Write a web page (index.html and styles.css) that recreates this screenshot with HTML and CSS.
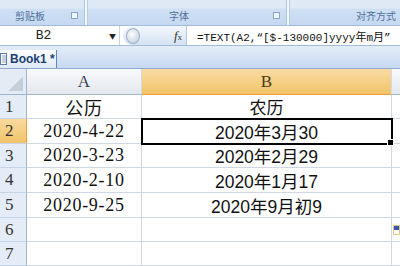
FILE: index.html
```html
<!DOCTYPE html>
<html lang="zh-CN">
<head>
    <meta charset="UTF-8">
    <title>Book1 - 农历</title>
    <link rel="stylesheet" href="styles.css">
</head>
<body>
    <!-- Ribbon group labels -->
    <div class="ribbon">
        <div class="group group-clip">
            <span class="group-label">剪贴板</span>
            <span class="launcher"></span>
        </div>
        <div class="group group-font">
            <span class="group-label">字体</span>
            <span class="launcher"></span>
        </div>
        <div class="group group-align">
            <span class="group-label">对齐方式</span>
        </div>
    </div>

    <!-- Formula bar -->
    <div class="formula-bar">
        <div class="name-box">
            <span class="name">B2</span>
            <span class="arrow">&#9660;</span>
        </div>
        <div class="fx-pill">
            <span class="knob"></span>
            <span class="fx"><i>f</i><small>x</small></span>
        </div>
        <div class="formula">=TEXT(A2,“[$-130000]yyyy年m月”</div>
    </div>

    <!-- Workbook tabs -->
    <div class="tabs">
        <div class="tab">
            <svg class="doc-icon" width="7" height="12" viewBox="0 0 7 12">
                <rect x="0.5" y="0.5" width="6" height="11" fill="#fff" stroke="#5a7aa8"/>
                <path d="M2 3h4M2 5h4M2 7h4M2 9h4" stroke="#8aa2c4" stroke-width="1"/>
            </svg>
            <span>Book1 *</span>
        </div>
    </div>

    <!-- Sheet -->
    <div class="sheet">
        <div class="corner"></div>
        <div class="col-head">A</div>
        <div class="col-head selected">B</div>
        <div class="col-head rest"></div>

        <div class="row-head">1</div>
        <div class="cell serif">公历</div>
        <div class="cell">农历</div>
        <div class="cell rest"></div>

        <div class="row-head selected">2</div>
        <div class="cell serif">2020-4-22</div>
        <div class="cell sans active">2020年3月30</div>
        <div class="cell rest"></div>

        <div class="row-head">3</div>
        <div class="cell serif">2020-3-23</div>
        <div class="cell sans">2020年2月29</div>
        <div class="cell rest"></div>

        <div class="row-head">4</div>
        <div class="cell serif">2020-2-10</div>
        <div class="cell sans">2020年1月17</div>
        <div class="cell rest"></div>

        <div class="row-head">5</div>
        <div class="cell serif">2020-9-25</div>
        <div class="cell sans">2020年9月初9</div>
        <div class="cell rest"></div>

        <div class="row-head">6</div>
        <div class="cell"></div>
        <div class="cell"></div>
        <div class="cell rest"><span class="paste-icon"></span></div>

        <div class="row-head">7</div>
        <div class="cell"></div>
        <div class="cell"></div>
        <div class="cell rest"></div>
    </div>
</body>
</html>
```
FILE: styles.css
```css
body {
    margin: 0;
    width: 400px;
    height: 266px;
    overflow: hidden;
    background: #fff;
    font-family: "Noto Sans CJK SC", sans-serif;
}

/* Ribbon */
.ribbon {
    display: flex;
    height: 26px;
    background: linear-gradient(to bottom, #dfe9f6 0, #dfe9f6 8px, #cfe0f4 9px, #c4d8f0 100%);
    border-bottom: 1px solid #a3bcdb;
    box-sizing: border-box;
    overflow: hidden;
}

.group {
    position: relative;
    display: flex;
    align-items: flex-end;
    flex: none;
    padding-bottom: 3px;
    box-sizing: border-box;
    border-right: 1px solid #aec5e0;
    box-shadow: 1px 0 0 #f4f8fd, 2px 0 0 #f4f8fd, 3px 0 0 #b6cce6;
}

.group-clip {
    width: 85px;
    padding-left: 15px;
}

.group-font {
    width: 199px;
    margin-left: 3px;
    padding-left: 81px;
}

.group-align {
    flex: 1;
    margin-left: 3px;
    padding-left: 66px;
    border-right: none;
    box-shadow: none;
}

.group-label {
    font-size: 10px;
    line-height: 13px;
    color: #50709c;
    white-space: nowrap;
}

.launcher {
    position: absolute;
    right: 6px;
    top: 12px;
    width: 5px;
    height: 5px;
    border: 1px solid #8aa4c8;
    background: #eef4fb;
}

/* Formula bar */
.formula-bar {
    display: flex;
    align-items: center;
    height: 20px;
    background: #fff;
    border-bottom: 1px solid #a3bcd9;
    box-sizing: border-box;
    overflow: hidden;
}

.name-box {
    display: flex;
    align-items: center;
    flex: none;
    width: 120px;
    height: 100%;
    border-right: 1px solid #c5d4e6;
    box-sizing: border-box;
}

.name {
    flex: 1;
    text-align: center;
    font-family: "Liberation Mono", monospace;
    font-size: 13px;
    color: #222;
    margin-right: 22px;
}

.arrow {
    font-size: 7px;
    color: #222;
    padding-right: 3px;
}

.fx-pill {
    display: flex;
    align-items: center;
    justify-content: space-between;
    flex: none;
    width: 64px;
    height: 100%;
    margin-left: 3px;
    padding-right: 4px;
    background: linear-gradient(to bottom, #f4f8fd, #d4e2f3);
    border-radius: 10px 0 0 10px;
    border-right: 1px solid #b5c8e0;
    box-sizing: border-box;
}

.knob {
    width: 12px;
    height: 14px;
    margin-left: 3px;
    border-radius: 50%;
    background: radial-gradient(circle at 40% 40%, #fff, #b8c6d8);
    border: 1px solid #9fb2c9;
}

.fx {
    font-family: "Liberation Serif", serif;
    font-size: 13px;
    color: #333;
}

.fx small {
    font-size: 9px;
}

.formula {
    flex: none;
    padding-left: 10px;
    font-family: "Liberation Mono", "Noto Sans CJK SC", monospace;
    font-size: 11px;
    color: #111;
    white-space: nowrap;
}

/* Tabs */
.tabs {
    height: 23px;
    display: flex;
    align-items: flex-end;
    background: linear-gradient(to bottom, #e3edf9, #c7d9f0);
    border-bottom: 1px solid #8eaad0;
    box-sizing: border-box;
}

.tab {
    display: flex;
    align-items: center;
    gap: 3px;
    width: 57px;
    height: 18px;
    background: linear-gradient(to bottom, #fdfeff, #dfe9f6);
    border-right: 1px solid #6685b3;
    box-sizing: border-box;
    font-family: "Liberation Sans", sans-serif;
    font-weight: bold;
    font-size: 12px;
    color: #1d3f73;
}

.doc-icon {
    display: block;
}

/* Sheet grid */
.sheet {
    display: grid;
    grid-template-columns: 27px 115px 250px 1fr;
    grid-template-rows: 26px 24px 25px 24px 25px 25px 24px 24px;
}

.corner {
    background: linear-gradient(135deg, transparent 50%, #c4cfdc 50%) no-repeat right 3px bottom 3px / 14px 14px, #e4ebf4;
    border-right: 1px solid #9eb6ce;
    border-bottom: 1px solid #9eb6ce;
}

.col-head {
    display: flex;
    align-items: center;
    justify-content: center;
    background: linear-gradient(to bottom, #f8f9fb, #e4e8ee);
    border-right: 1px solid #d5dae2;
    border-bottom: 1px solid #9eb6ce;
    box-sizing: border-box;
    font-family: "Liberation Serif", serif;
    font-size: 17px;
    color: #3a4656;
}

.col-head.selected {
    background: linear-gradient(to bottom, #f9dba3, #f1c468);
    border-bottom: 1px solid #f29b3a;
    color: #4a3b1c;
}

.row-head {
    display: flex;
    align-items: center;
    padding-left: 5px;
    background: #e4ecf7;
    border-right: 1px solid #9eb6ce;
    border-bottom: 1px solid #c5d4e6;
    box-sizing: border-box;
    font-family: "Liberation Serif", serif;
    font-size: 17px;
    color: #333;
}

.row-head.selected {
    background: linear-gradient(to bottom, #f9d99e, #f2c46a);
    border-right-color: #f29b3a;
}

.cell {
    display: flex;
    align-items: center;
    justify-content: center;
    border-right: 1px solid #d0d7e5;
    border-bottom: 1px solid #d0d7e5;
    box-sizing: border-box;
    font-size: 17px;
    color: #111;
    white-space: nowrap;
}

.cell.serif {
    font-family: "Liberation Serif", "Noto Sans CJK SC", serif;
    font-size: 18px;
    letter-spacing: 0.7px;
}

.cell.sans {
    font-family: "Liberation Sans", "Noto Sans CJK SC", sans-serif;
    font-size: 17.5px;
}

.cell.active {
    position: relative;
    outline: 2px solid #000;
    outline-offset: -1px;
}

.cell.active::after {
    content: "";
    position: absolute;
    right: -3px;
    bottom: -3px;
    width: 5px;
    height: 5px;
    background: #000;
    border: 1px solid #fff;
}

.col-head.rest,
.cell.rest {
    border-right: none;
}

.cell.rest {
    justify-content: flex-end;
}

.paste-icon {
    width: 7px;
    height: 10px;
    background: linear-gradient(to bottom, #3a55a8 0, #3a55a8 4px, #fff 4px);
    border: 1px solid #e0c890;
    box-sizing: border-box;
}
```
